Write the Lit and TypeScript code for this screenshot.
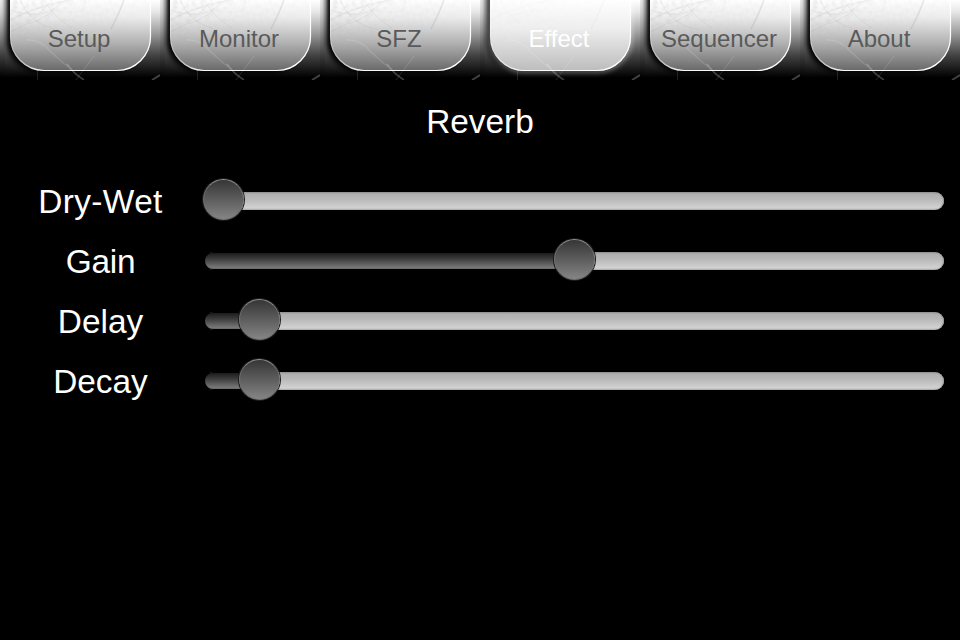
import { LitElement, html, css, svg } from "lit";
import { customElement, property } from "lit/decorators.js";
import { classMap } from "lit/directives/class-map.js";
import { styleMap } from "lit/directives/style-map.js";

@customElement("tab-button")
class TabButton extends LitElement {
  @property() label = "";
  @property({ type: Boolean }) active = false;

  static styles = css`
    :host { display: block; width: 160px; height: 80px; }
    .cell { display: grid; width: 160px; height: 80px; overflow: hidden; }
    .cell > * { grid-area: 1 / 1; }
    svg { display: block; }
    .label {
      width: 158px;
      height: 80px;
      line-height: 78px;
      text-align: center;
      white-space: nowrap;
      font-size: 24px;
      color: #5a5a5a;
    }
    .active { color: #fff; }
  `;

  render() {
    return html`<div class="cell">
      <svg width="160" height="80" viewBox="0 0 160 80">
        <defs>
          <linearGradient id="back" x2="0" y2="1">
            <stop offset="0" stop-color="#fff" />
            <stop offset=".15" stop-color="#e6e6e6" />
            <stop offset=".4" stop-color="#a0a0a0" />
            <stop offset=".7" stop-color="#404040" />
            <stop offset=".97" stop-color="#000" />
          </linearGradient>
          <linearGradient id="face" x2="0" y2="1">
            <stop offset="0" stop-color="#fff" />
            <stop offset=".25" stop-color="#ebebeb" />
            <stop offset=".6" stop-color="#b2b2b2" />
            <stop offset="1" stop-color="#686868" />
          </linearGradient>
          <linearGradient id="lit" x2="0" y2="1">
            <stop offset="0" stop-color="#fff" />
            <stop offset=".4" stop-color="#eee" />
            <stop offset="1" stop-color="#bcbcbc" />
          </linearGradient>
          <linearGradient id="rim" x1="0" y1="0" x2="1" y2="0">
            <stop offset="0" stop-color="#fff" stop-opacity=".3" />
            <stop offset=".22" stop-color="#fff" stop-opacity=".95" />
            <stop offset="1" stop-color="#fff" />
          </linearGradient>
          <filter id="soft" x="-30%" y="-30%" width="160%" height="160%">
            <feGaussianBlur stdDeviation="2.600" />
          </filter>
          <filter id="grain" x="0" y="0" width="100%" height="100%">
            <feTurbulence type="fractalNoise" baseFrequency=".22" numOctaves="3" seed="4" />
            <feColorMatrix values="0 0 0 0 .4  0 0 0 0 .4  0 0 0 0 .4  1.6 0 0 0 -.62" />
          </filter>
          <linearGradient id="fade" x2=".7" y2="1">
            <stop offset="0" stop-color="#fff" />
            <stop offset=".6" stop-color="#000" />
          </linearGradient>
          <mask id="fadeMask"><rect width="160" height="80" fill="url(#fade)" /></mask>
          <clipPath id="shape"><path d="M10 -4H151V37A34 34 0 0 1 117 71H44A34 34 0 0 1 10 37Z" /></clipPath>
        </defs>
        <rect width="160" height="80" fill="url(#back)" />
        <rect width="5" height="80" fill="#000" opacity=".08" />
        <path d="M6 -12H144V37A34 34 0 0 1 112 73H42A36 34 0 0 1 6 39Z" fill="#000" filter="url(#soft)" />
        ${this.active ? svg`<path d="M10 -4H151V37A34 34 0 0 1 117 71H44A34 34 0 0 1 10 37Z" fill="none" stroke="#fff" stroke-opacity=".55" stroke-width="3" filter="url(#soft)" />` : ""}
        <g clip-path="url(#shape)">
          <rect x="10" width="141" height="71" fill=${this.active ? "url(#lit)" : "url(#face)"} />
          <g opacity=${this.active ? ".25" : "1"}>
            <g mask="url(#fadeMask)"><rect width="160" height="80" filter="url(#grain)" opacity=".3" /></g>
            <g fill="none" stroke="#777" stroke-opacity=".09" stroke-width="1">
              <path d="M10 20Q40 5 70 0M10 10Q50 22 61 0M20 0Q30 24 58 30M45 0Q52 16 72 28M10 32Q35 22 52 0M65 0Q48 18 28 24" />
              <path d="M124 0Q119 14 111 29" stroke-width="1.500" stroke-opacity=".16" />
            </g>
          </g>
        </g>
        <g fill="none" stroke="#fff" stroke-opacity=".22">
          <path d="M26 40Q40 39 50 51L68 67" stroke-opacity=".13" stroke-width="1.300" />
          <path d="M67 64Q73 73 84 80" stroke-width="1.800" />
          <path d="M94 56L76 80" stroke-opacity=".14" />
          <path d="M37.500 70V80" stroke-opacity=".12" />
          <path d="M152 80L160 75" stroke-width="2" stroke-opacity=".25" />
        </g>
        <path d="M10.500 -2V37A34 33.500 0 0 0 44 70.500H117A33.500 34 0 0 0 150.500 37V-2" fill="none" stroke="url(#rim)" stroke-width="1.200" />
      </svg>
      <div class=${classMap({ label: true, active: this.active })}>${this.label}</div>
    </div>`;
  }
}

@customElement("fader-row")
class FaderRow extends LitElement {
  @property() label = "";
  @property({ type: Number }) value = 0;
  @property({ type: Number }) tracking = 0;

  static styles = css`
    :host { display: grid; grid-template-columns: 198px 1fr; height: 60px; }
    .label {
      padding-left: 3px; text-align: center; font-size: 33.4px; line-height: 64px; height: 60px;
      color: #fff; white-space: nowrap;
    }
    .slider { position: relative; margin: 22px 16px 0 7px; height: 18px; }
    .track {
      height: 18px; box-sizing: border-box; border-radius: 9px;
      background: linear-gradient(#8c8c8c 0, #b0b0b0 2px, #b8b8b8 7px, #d2d2d2 16px, #aaa 18px);
      box-shadow: inset -1px 0 1px #999;
    }
    .fill {
      position: absolute; left: -1px; top: 0; height: 18px; box-sizing: border-box;
      border-radius: 9px 0 0 9px; border: 1px solid #000; border-right: 0;
      background: linear-gradient(#1c1c1c, #3a3a3a 35%, #777 90%, #666);
    }
    .knob {
      position: absolute; top: -13px; width: 41px; height: 41px; box-sizing: border-box;
      border-radius: 50%; border: 1px solid #707070; border-top-color: #909090;
      background: linear-gradient(#363636, #858585);
      box-shadow: 0 0 0 1px #1c1c1c;
    }
  `;

  render() {
    const x = -2 + this.value * 703;
    return html`
      <div class="label" style=${styleMap({ letterSpacing: `${this.tracking}px` })}>${this.label}</div>
      <div class="slider">
        <div class="track"></div>
        <div class="fill" style=${styleMap({ width: `${x + 21}px` })}></div>
        <div class="knob" style=${styleMap({ left: `${x}px` })}></div>
      </div>`;
  }
}

@customElement("app-root")
class AppRoot extends LitElement {
  static styles = css`
    :host {
      display: block; width: 960px; height: 640px; overflow: hidden; background: #000;
      font-family: "Liberation Sans", Arial, sans-serif;
    }
    .tabs { display: flex; height: 80px; }
    .title { height: 90px; line-height: 83px; text-align: center; font-size: 33.4px; color: #fff; }
  `;

  tabs = ["Setup", "Monitor", "SFZ", "Effect", "Sequencer", "About"];
  faders: [string, number, number][] = [
    ["Dry-Wet", 0, 0.4],
    ["Gain", 0.4995, -0.3],
    ["Delay", 0.0505, 0],
    ["Decay", 0.0505, 0],
  ];

  render() {
    return html`
      <nav class="tabs">
        ${this.tabs.map((t) => html`<tab-button .label=${t} .active=${t === "Effect"}></tab-button>`)}
      </nav>
      <div class="title">Reverb</div>
      ${this.faders.map(([n, v, s]) => html`<fader-row .label=${n} .value=${v} .tracking=${s}></fader-row>`)}
    `;
  }
}
